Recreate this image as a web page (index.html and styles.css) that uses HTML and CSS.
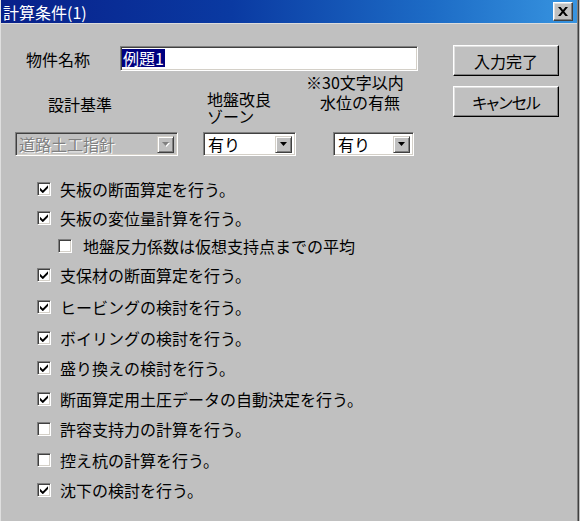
FILE: index.html
```html
<!DOCTYPE html>
<html lang="ja">
<head>
<meta charset="utf-8">
<title>計算条件(1)</title>
<link rel="stylesheet" href="styles.css">
</head>
<body>
<div class="window">
  <div class="titlebar">
    <span class="title">計算条件(1)</span>
    <button class="close" aria-label="閉じる">
      <svg width="10" height="9" viewBox="0 0 10 9"><path d="M0 0h2.6l2.4 2.9L7.4 0H10L6.3 4.5 10 9H7.4L5 6.1 2.6 9H0l3.7-4.5z" fill="#000"/></svg>
    </button>
  </div>
  <div class="content">
    <div class="top">
      <div class="fields">
        <div class="name-row">
          <span class="name-label">物件名称</span>
          <div class="textbox"><span class="sel">例題1</span></div>
        </div>
        <div class="note">※30文字以内</div>
        <div class="label-row">
          <span class="lbl lbl-std">設計基準</span>
          <span class="lbl lbl-zone">地盤改良<br>ゾーン</span>
          <span class="lbl lbl-water">水位の有無</span>
        </div>
        <div class="select-row">
          <div class="combo combo-std disabled">
            <span class="val">道路土工指針</span>
            <span class="arrow"><svg width="7" height="4" viewBox="0 0 7 4"><path d="M0 0h7L3.5 4z"/></svg></span>
          </div>
          <div class="combo combo-zone">
            <span class="val">有り</span>
            <span class="arrow"><svg width="7" height="4" viewBox="0 0 7 4"><path d="M0 0h7L3.5 4z"/></svg></span>
          </div>
          <div class="combo combo-water">
            <span class="val">有り</span>
            <span class="arrow"><svg width="7" height="4" viewBox="0 0 7 4"><path d="M0 0h7L3.5 4z"/></svg></span>
          </div>
        </div>
      </div>
      <div class="buttons">
        <button class="btn">入力完了</button>
        <button class="btn btn-kana">キャンセル</button>
      </div>
    </div>

    <div class="checks group1">
      <div class="row"><span class="box checked"><svg width="8" height="8" viewBox="0 0 8 8"><path d="M0 2.8L2.8 5.4 8 .3V3.1L2.8 8.2 0 5.6z"/></svg></span><span class="txt">矢板の断面算定を行う。</span></div>
      <div class="row"><span class="box checked"><svg width="8" height="8" viewBox="0 0 8 8"><path d="M0 2.8L2.8 5.4 8 .3V3.1L2.8 8.2 0 5.6z"/></svg></span><span class="txt">矢板の変位量計算を行う。</span></div>
      <div class="row sub"><span class="box"></span><span class="txt">地盤反力係数は仮想支持点までの平均</span></div>
      <div class="row"><span class="box checked"><svg width="8" height="8" viewBox="0 0 8 8"><path d="M0 2.8L2.8 5.4 8 .3V3.1L2.8 8.2 0 5.6z"/></svg></span><span class="txt">支保材の断面算定を行う。</span></div>
    </div>
    <div class="checks group2">
      <div class="row"><span class="box checked"><svg width="8" height="8" viewBox="0 0 8 8"><path d="M0 2.8L2.8 5.4 8 .3V3.1L2.8 8.2 0 5.6z"/></svg></span><span class="txt">ヒービングの検討を行う。</span></div>
      <div class="row"><span class="box checked"><svg width="8" height="8" viewBox="0 0 8 8"><path d="M0 2.8L2.8 5.4 8 .3V3.1L2.8 8.2 0 5.6z"/></svg></span><span class="txt">ボイリングの検討を行う。</span></div>
      <div class="row"><span class="box checked"><svg width="8" height="8" viewBox="0 0 8 8"><path d="M0 2.8L2.8 5.4 8 .3V3.1L2.8 8.2 0 5.6z"/></svg></span><span class="txt">盛り換えの検討を行う。</span></div>
      <div class="row"><span class="box checked"><svg width="8" height="8" viewBox="0 0 8 8"><path d="M0 2.8L2.8 5.4 8 .3V3.1L2.8 8.2 0 5.6z"/></svg></span><span class="txt">断面算定用土圧データの自動決定を行う。</span></div>
      <div class="row"><span class="box"></span><span class="txt">許容支持力の計算を行う。</span></div>
      <div class="row"><span class="box"></span><span class="txt">控え杭の計算を行う。</span></div>
      <div class="row"><span class="box checked"><svg width="8" height="8" viewBox="0 0 8 8"><path d="M0 2.8L2.8 5.4 8 .3V3.1L2.8 8.2 0 5.6z"/></svg></span><span class="txt">沈下の検討を行う。</span></div>
    </div>
  </div>
</div>
</body>
</html>
```

FILE: styles.css
```css
html, body {
  margin: 0;
  padding: 0;
  background: #c0c0c0;
}

body {
  font-family: "Noto Sans CJK JP", "Noto Sans", sans-serif;
  font-size: 16px;
  color: #000;
}

.window {
  width: 576px;
  height: 521px;
  background: #c0c0c0;
  border-left: 1px solid #dfdfdf;
  border-right: 1px solid #808080;
  box-shadow: 1px 0 0 #404040;
  overflow: hidden;
}

.titlebar {
  height: 23px;
  display: flex;
  align-items: center;
  justify-content: space-between;
  padding: 0 4px 0 2px;
  background: linear-gradient(to right, #08208a 0%, #0a3aa2 40%, #1d6cc6 75%, #3794e0 100%);
  border-bottom: 1px solid #dcdcdc;
}

.title {
  color: #fff;
  font-size: 16px;
  line-height: 18px;
}

.close {
  width: 20px;
  height: 19px;
  padding: 0;
  margin: 0;
  display: flex;
  align-items: center;
  justify-content: center;
  background: #c0c0c0;
  border: 1px solid;
  border-color: #fff #404040 #404040 #fff;
  box-shadow: inset -1px -1px 0 #808080, inset 1px 1px 0 #dfdfdf;
}

.content {
  padding-top: 21px;
}

.top {
  display: flex;
  align-items: flex-start;
}

.fields {
  margin-left: 14px;
  width: 403px;
}

.name-row {
  display: flex;
  align-items: center;
  margin-top: 1px;
  height: 25px;
}

.name-label {
  width: 94px;
  padding-left: 11px;
  line-height: 18px;
}

.textbox {
  width: 298px;
  height: 25px;
  box-sizing: border-box;
  background: #fff;
  border: 1px solid;
  border-color: #808080 #fff #fff #808080;
  box-shadow: inset 1px 1px 0 #404040, inset -1px -1px 0 #d4d0c8;
  padding: 2px 2px 0 1px;
  display: flex;
  align-items: flex-start;
}

.sel {
  background: #000080;
  color: #fff;
  line-height: 18px;
  padding: 0 1px;
}

.note {
  margin-top: 3px;
  padding-left: 291px;
  line-height: 16px;
  height: 17px;
  white-space: nowrap;
}

.label-row {
  display: flex;
  align-items: flex-start;
  line-height: 17px;
  height: 34px;
}

.lbl {
  white-space: nowrap;
}

.lbl-std {
  width: 64px;
  margin-left: 33px;
  margin-top: 5px;
}

.lbl-zone {
  width: 64px;
  margin-left: 95px;
}

.lbl-water {
  margin-left: 49px;
  margin-top: 3px;
}

.select-row {
  display: flex;
  margin-top: 7px;
}

.combo {
  height: 24px;
  box-sizing: border-box;
  display: flex;
  align-items: center;
  background: #fff;
  border: 1px solid;
  border-color: #808080 #fff #fff #808080;
  box-shadow: inset 1px 1px 0 #404040, inset -1px -1px 0 #d4d0c8;
  padding: 0 3px 0 4px;
}

.combo-std { width: 163px; padding-left: 3px; }
.combo-zone { width: 93px; margin-left: 25px; }
.combo-water { width: 81px; margin-left: 37px; }

.val {
  line-height: 18px;
  white-space: nowrap;
}

.arrow {
  margin-left: auto;
  width: 17px;
  height: 17px;
  box-sizing: border-box;
  display: flex;
  align-items: center;
  justify-content: center;
  background: #c0c0c0;
  border: 1px solid;
  border-color: #d4d0c8 #404040 #404040 #d4d0c8;
  box-shadow: inset 1px 1px 0 #fff, inset -1px -1px 0 #808080;
}

.arrow svg { fill: #000; }

.disabled {
  background: #c0c0c0;
}

.disabled .val {
  color: #808080;
  text-shadow: 1px 1px 0 #fff;
}

.disabled .arrow svg {
  fill: #808080;
  filter: drop-shadow(1px 1px 0 #fff);
}

.buttons {
  margin-left: 35px;
  display: flex;
  flex-direction: column;
  gap: 10px;
}

.btn {
  width: 106px;
  height: 31px;
  padding: 0;
  font-family: inherit;
  font-size: 16px;
  color: #000;
  background: #c0c0c0;
  border: 1px solid;
  border-color: #fff #000 #000 #fff;
  box-shadow: inset -1px -1px 0 #808080, inset 1px 1px 0 #dfdfdf;
}

.btn-kana {
  font-feature-settings: "palt";
  letter-spacing: -1px;
}

.checks .row {
  display: flex;
  align-items: center;
  padding-left: 36px;
}

.group1 {
  margin-top: 19px;
}

.group1 .row { height: 28.5px; }

.group2 {
  margin-top: 3px;
}

.group2 .row { height: 30.5px; }

.checks .row.sub {
  padding-left: 57px;
}

.box {
  width: 14px;
  height: 14px;
  flex: none;
  box-sizing: border-box;
  background: #fff;
  border: 1px solid;
  border-color: #808080 #fff #fff #808080;
  box-shadow: inset 1px 1px 0 #404040, inset -1px -1px 0 #d4d0c8;
  display: flex;
  align-items: center;
  justify-content: center;
}

.box svg { fill: #000; }

.txt {
  margin-left: 9px;
  line-height: 18px;
  white-space: nowrap;
}

.sub .txt {
  margin-left: 11px;
}
```
